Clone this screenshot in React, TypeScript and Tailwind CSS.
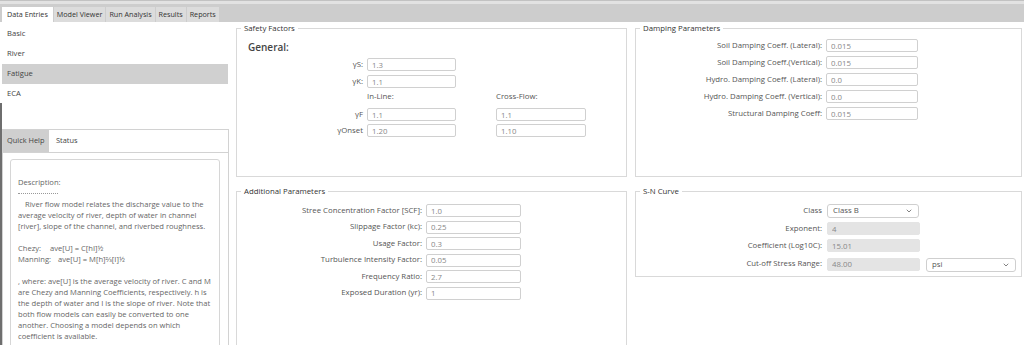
import React from "react";
import { ChevronDown } from "lucide-react";

const tabs = ["Data Entries", "Model Viewer", "Run Analysis", "Results", "Reports"];
const sideItems = ["Basic", "River", "Fatigue", "ECA"];

const helpLines1 = [
  "River flow model relates the discharge value to the",
  "average velocity of river, depth of water in channel",
  "[river], slope of the channel, and riverbed roughness.",
];
const helpLines2 = [
  ", where: ave[U] is the average velocity of river. C and M",
  "are Chezy and Manning Coefficients, respectively. h is",
  "the depth of water and I is the slope of river. Note that",
  "both flow models can easily be converted to one",
  "another. Choosing a model depends on which",
  "coefficient is available.",
];

const damping = [
  ["Soil Damping Coeff. (Lateral):", "0.015"],
  ["Soil Damping Coeff.(Vertical):", "0.015"],
  ["Hydro. Damping Coeff. (Lateral):", "0.0"],
  ["Hydro. Damping Coeff. (Vertical):", "0.0"],
  ["Structural Damping Coeff:", "0.015"],
];

const additional = [
  ["Stree Concentration Factor [SCF]:", "1.0"],
  ["Slippage Factor (kc):", "0.25"],
  ["Usage Factor:", "0.3"],
  ["Turbulence Intensity Factor:", "0.05"],
  ["Frequency Ratio:", "2.7"],
  ["Exposed Duration (yr):", "1"],
];

// fieldset box with legend like the desktop form groups
function Group({ title, className, children }: { title: string; className?: string; children?: React.ReactNode }) {
  return (
    <fieldset className={`border border-[#d9d9d9] min-w-0 ${className ?? ""}`}>
      <legend className="ml-[4px] px-[3px] text-[7.8px] leading-[10px] text-[#333]">{title}</legend>
      {children}
    </fieldset>
  );
}

function Field({ value, w, gray }: { value: string; w: string; gray?: boolean }) {
  return (
    <input
      readOnly
      value={value}
      className={`h-[13px] ${w} border rounded-[2px] px-[4px] text-[7.8px] leading-[11px] text-[#888] outline-none ${
        gray ? "bg-[#e4e4e4] border-[#e4e4e4]" : "bg-white border-[#d0d0d0]"
      }`}
    />
  );
}

function Select({ value, w }: { value: string; w: string }) {
  return (
    <div
      className={`h-[14px] ${w} border border-[#cfcfcf] rounded-[3px] bg-white flex items-center justify-between pl-[5px] pr-[5px] text-[7.8px] text-[#555]`}
    >
      <span>{value}</span>
      <ChevronDown size={8} strokeWidth={2.2} className="text-[#555]" />
    </div>
  );
}

export default function App() {
  return (
    <div className="w-[1024px] h-[345px] overflow-hidden bg-white font-['Open_Sans',sans-serif] text-[#555]">
      {/* Top tab strip */}
      <div className="h-[22px] border-t border-[#c2c2c2] bg-[#cdcdcd] flex flex-col">
        <div className="h-[3px] bg-[#e2e2e2]" />
        <div className="flex items-end gap-[1px] pl-[2px] flex-1">
          {tabs.map((t, i) => (
            <div
              key={t}
              className={`h-[15px] flex items-center text-[7.2px] text-[#333] ${
                i === 0 ? "bg-white px-[5px]" : "bg-[#dcdcdc] px-[3px]"
              }`}
            >
              {t}
            </div>
          ))}
        </div>
      </div>

      <div className="flex">
        {/* Left column */}
        <div className="w-[232px] flex flex-col shrink-0">
          <div className="pt-[1.5px] h-[81px]">
            {sideItems.map((s) => (
              <div
                key={s}
                className={`h-[20px] w-[226px] ml-[2px] pl-[5px] flex items-center text-[7.6px] text-[#444] ${
                  s === "Fatigue" ? "bg-[#d0d0d0]" : ""
                }`}
              >
                {s}
              </div>
            ))}
          </div>
          <div className="border-l-2 border-[#6e6e6e] pt-[26px] h-[242px]">
            <div className="border border-[#d2d2d2] w-[227px] h-[300px]">
              <div className="h-[23px] flex items-stretch border-b border-[#d2d2d2] text-[7.4px] text-[#444]">
                <div className="bg-[#cfcfcf] w-[46px] flex items-center pl-[4px] whitespace-nowrap">Quick Help</div>
                <div className="flex items-center pl-[7px]">Status</div>
              </div>
              <div className="mt-[6px] ml-[7px] w-[210px] h-[260px] border border-[#d6d6d6] rounded-[3px] pt-[17px] pl-[7px] text-[7.6px] leading-[11px] text-[#666] whitespace-nowrap">
                <div>Description:</div>
                <div className="h-[11px] flex items-center">
                  <div className="w-[40px] border-b border-dotted border-[#999]" />
                </div>
                {helpLines1.map((l, i) => (
                  <div key={l} className={i === 0 ? "pl-[7px]" : ""}>
                    {l}
                  </div>
                ))}
                <div className="h-[11px]" />
                <div className="flex">
                  <span className="w-[32px]">Chezy:</span>
                  <span>ave[U] = C[hI]½</span>
                </div>
                <div className="flex">
                  <span className="w-[40px]">Manning:</span>
                  <span>ave[U] = M[h]⅔[I]½</span>
                </div>
                <div className="h-[11px]" />
                {helpLines2.map((l) => (
                  <div key={l}>{l}</div>
                ))}
              </div>
            </div>
          </div>
        </div>

        {/* Main forms */}
        <div className="flex-1 pl-[4px] pt-[1px] pr-[2px] grid grid-cols-[391px_387px] gap-x-[8px] gap-y-[9px] content-start text-[7.8px]">
          <Group title="Safety Factors" className="h-[154px]">
            <div className="mt-[7px] ml-[11px] text-[10px] leading-[14px] font-semibold text-[#444]">General:</div>
            <div className="mt-[4px] flex flex-col">
              <div className="flex items-center">
                <span className="w-[126px] mr-[4px] text-right">γS:</span>
                <Field value="1.3" w="w-[89px]" />
              </div>
              <div className="flex items-center mt-[4px]">
                <span className="w-[126px] mr-[4px] text-right">γK:</span>
                <Field value="1.1" w="w-[89px]" />
              </div>
              <div className="flex items-center mt-[3px] h-[12px]">
                <span className="w-[126px] mr-[4px]" />
                <span className="w-[129px]">In-Line:</span>
                <span>Cross-Flow:</span>
              </div>
              <div className="flex items-center mt-[5px]">
                <span className="w-[126px] mr-[4px] text-right">γF</span>
                <Field value="1.1" w="w-[89px]" />
                <span className="w-[40px]" />
                <Field value="1.1" w="w-[90px]" />
              </div>
              <div className="flex items-center mt-[3px]">
                <span className="w-[126px] mr-[4px] text-right">γOnset</span>
                <Field value="1.20" w="w-[89px]" />
                <span className="w-[40px]" />
                <Field value="1.10" w="w-[90px]" />
              </div>
            </div>
          </Group>

          <Group title="Damping Parameters" className="h-[154px]">
            <div className="mt-[6px] flex flex-col gap-[4px]">
              {damping.map(([l, v]) => (
                <div key={l} className="flex items-center">
                  <span className="w-[186px] mr-[4px] text-right">{l}</span>
                  <Field value={v} w="w-[92px]" />
                </div>
              ))}
            </div>
          </Group>

          <Group title="Additional Parameters" className="h-[170px]">
            <div className="mt-[8px] flex flex-col gap-[3.5px]">
              {additional.map(([l, v]) => (
                <div key={l} className="flex items-center">
                  <span className="w-[185px] mr-[4px] text-right">{l}</span>
                  <Field value={v} w="w-[95px]" />
                </div>
              ))}
            </div>
          </Group>

          <Group title="S-N Curve" className="h-[91px] self-start">
            <div className="mt-[8px] flex flex-col">
              <div className="flex items-center">
                <span className="w-[186px] mr-[5px] text-right">Class</span>
                <Select value="Class B" w="w-[92px]" />
              </div>
              <div className="flex items-center mt-[4px]">
                <span className="w-[186px] mr-[5px] text-right">Exponent:</span>
                <Field value="4" w="w-[93px]" gray />
              </div>
              <div className="flex items-center mt-[4px]">
                <span className="w-[186px] mr-[5px] text-right">Coefficient (Log10C):</span>
                <Field value="15.01" w="w-[93px]" gray />
              </div>
              <div className="flex items-center mt-[4px]">
                <span className="w-[186px] mr-[5px] text-right">Cut-off Stress Range:</span>
                <Field value="48.00" w="w-[93px]" gray />
                <span className="w-[6px]" />
                <div className="mt-[2px]">
                  <Select value="psi" w="w-[90px]" />
                </div>
              </div>
            </div>
          </Group>
        </div>
      </div>
    </div>
  );
}
